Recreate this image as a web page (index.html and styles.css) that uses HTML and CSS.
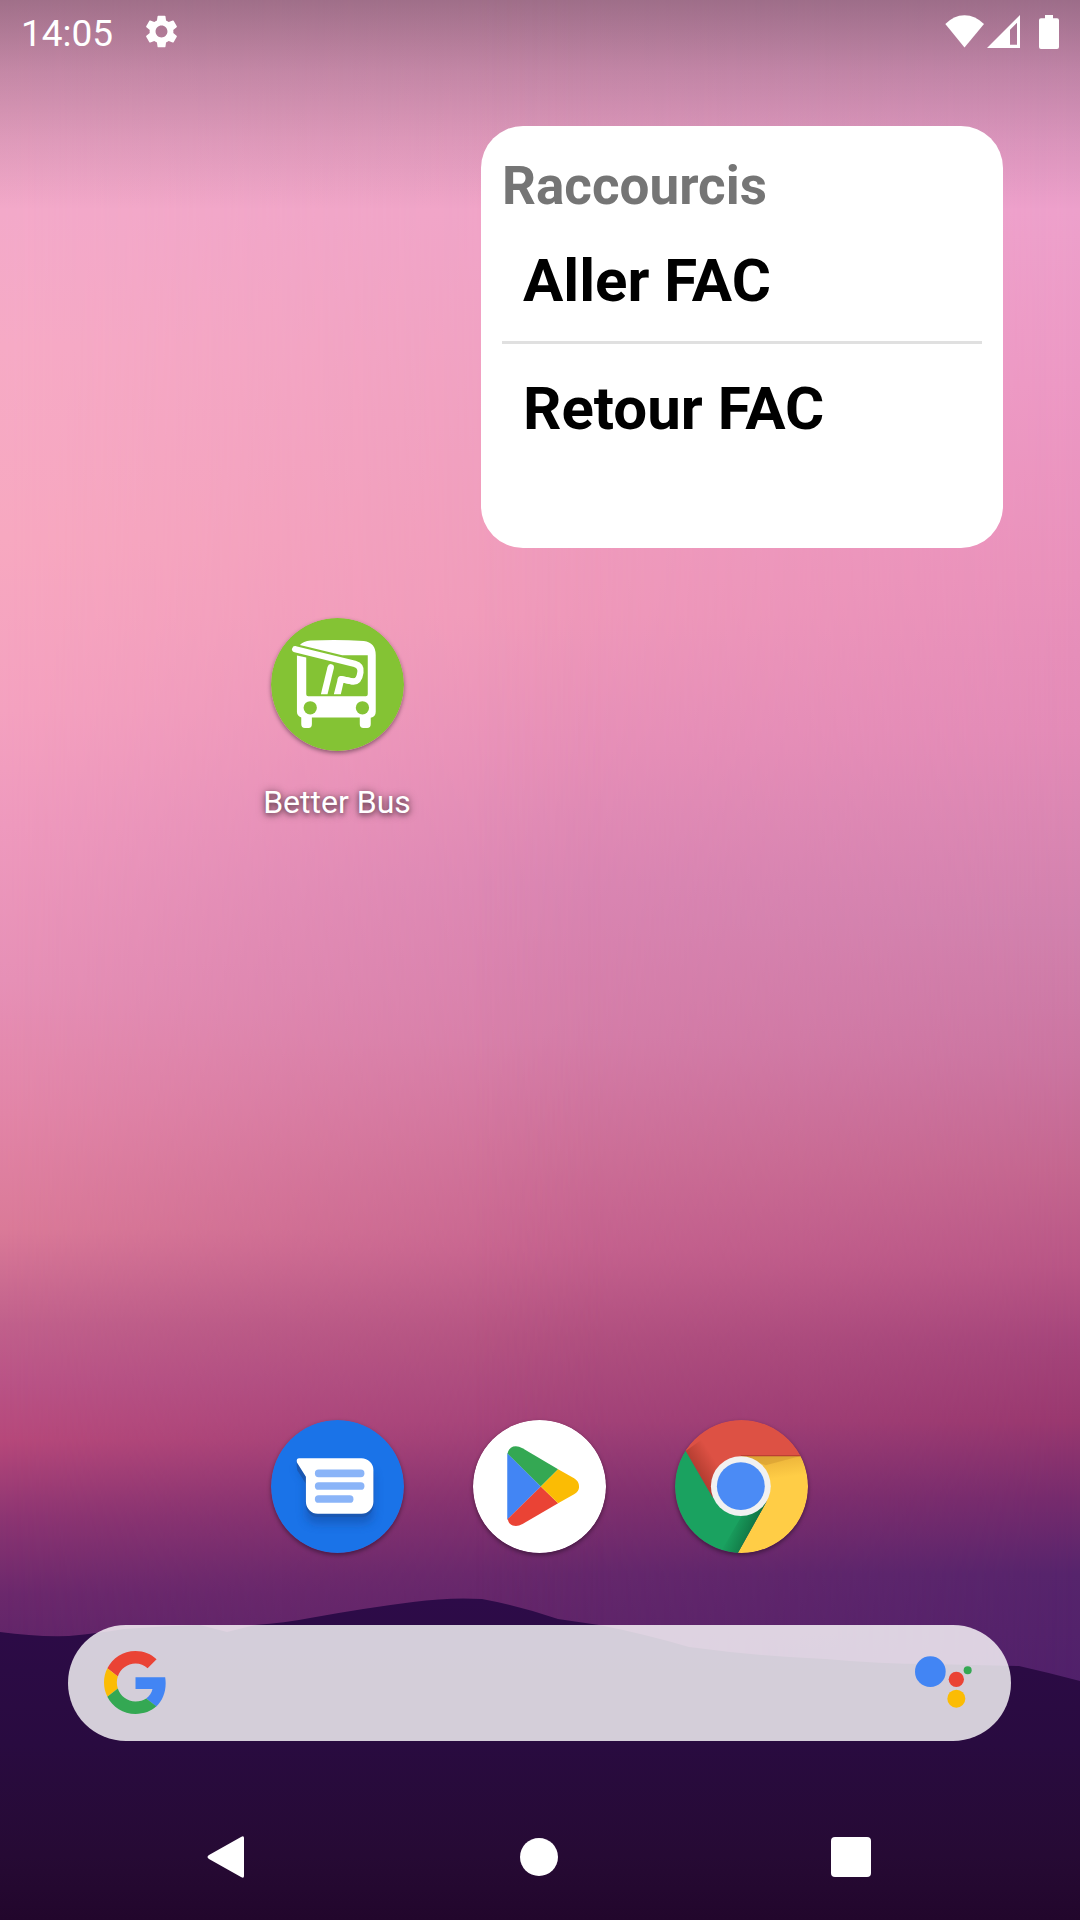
FILE: index.html
```html
<!DOCTYPE html>
<html lang="fr">
<head>
<meta charset="utf-8">
<meta name="viewport" content="width=device-width, initial-scale=1">
<title>Accueil</title>
<link rel="stylesheet" href="styles.css">
</head>
<body>
<div class="home">
  <div class="wallpaper" aria-hidden="true">
    <div class="sky sky-left"></div>
    <div class="sky sky-right"></div>
    <svg class="hills" viewBox="0 0 1080 330" preserveAspectRatio="none">
      <defs>
        <linearGradient id="ground" x1="0" y1="0" x2="0" y2="1">
          <stop offset="0" stop-color="#2d0b48"/>
          <stop offset=".45" stop-color="#290b40"/>
          <stop offset=".8" stop-color="#260a34"/>
          <stop offset="1" stop-color="#22062c"/>
        </linearGradient>
      </defs>
      <path fill="url(#ground)" d="M0 42Q35 47 69 46Q100 43 124 39Q165 36 200 35L227 42L255 35Q285 33 310 28Q365 18 413 12Q450 7 482 9Q520 16 558 29L599 35Q645 44 689 57Q755 66 826 69Q880 74 930 74L1019 76Q1050 83 1080 91V330H0z"/>
    </svg>
    <div class="scrim"></div>
  </div>

  <header class="status">
    <time class="clock">14:05</time>
    <svg class="gear" viewBox="2 2 20 20" aria-label="Paramètres"><path fill="#fff" d="M19.14 12.94c.04-.3.06-.61.06-.94 0-.32-.02-.64-.07-.94l2.03-1.58a.49.49 0 0 0 .12-.61l-1.92-3.32a.488.488 0 0 0-.59-.22l-2.39.96c-.5-.38-1.03-.7-1.62-.94l-.36-2.54a.484.484 0 0 0-.48-.41h-3.84c-.24 0-.43.17-.47.41l-.36 2.54c-.59.24-1.13.57-1.62.94l-2.39-.96c-.22-.08-.47 0-.59.22L2.74 8.87c-.12.21-.08.47.12.61l2.03 1.58c-.05.3-.09.63-.09.94s.02.64.07.94l-2.03 1.58a.49.49 0 0 0-.12.61l1.92 3.32c.12.22.37.29.59.22l2.39-.96c.5.38 1.03.7 1.62.94l.36 2.54c.05.24.24.41.48.41h3.84c.24 0 .44-.17.47-.41l.36-2.54c.59-.24 1.13-.56 1.62-.94l2.39.96c.22.08.47 0 .59-.22l1.92-3.32c.12-.22.07-.47-.12-.61l-2.01-1.58zM12 15.6c-1.98 0-3.6-1.62-3.6-3.6s1.62-3.6 3.6-3.6 3.6 1.62 3.6 3.6-1.62 3.6-3.6 3.6z"/></svg>
    <svg class="wifi" viewBox="134 42 118 99" aria-label="Wi-Fi"><path fill="#fff" d="M193 140L135 69Q160 42 193 42T252 69z"/></svg>
    <svg class="signal" viewBox="261 42 99 99" aria-label="Réseau mobile"><path fill="#fff" fill-rule="evenodd" d="M261 141L360 42V141zM330 86V131H351V65z"/></svg>
    <svg class="battery" viewBox="417 42 60 102" aria-label="Batterie"><path fill="#fff" d="M435 42h24v10h12q6 0 6 6v80q0 6-6 6h-48q-6 0-6-6v-80q0-6 6-6h12z"/></svg>
  </header>

  <main class="workspace">
    <section class="widget" aria-labelledby="widget-title">
      <h1 class="widget-title" id="widget-title">Raccourcis</h1>
      <ul class="shortcuts">
        <li><button class="shortcut" type="button">Aller FAC</button></li>
        <li><button class="shortcut" type="button">Retour FAC</button></li>
      </ul>
    </section>
    <button class="app app-bus" type="button">
      <svg class="icon" viewBox="93 53 400 400" aria-hidden="true">
        <circle cx="293" cy="253" r="200" fill="#84c334"/>
        <path fill="#fff" d="M180 134Q190 123 212 121Q290 117 372 122Q408 127 408 164V335Q408 350 393 353V372Q393 384 382 384H371Q360 384 360 372V352H216V372Q216 384 206 384H195Q184 384 184 372V352Q171 348 171 335V166L199 172V282Q199 288 205 288H378Q384 288 384 282V165H307z"/>
        <path fill="none" stroke="#fff" stroke-width="19" stroke-linecap="round" stroke-linejoin="round" d="M166 147L345 191Q365 197 362 216Q358 245 340 244L303 237"/>
        <path fill="#fff" d="M155 147L168 137L172 157z"/>
        <path fill="#fff" d="M263 200Q266 190 275 192Q284 194 282 204L263 282H243z"/>
        <path fill="#fff" d="M294 236Q298 226 308 228L344 236L338 254L311 248L303 282H282z"/>
        <circle cx="211" cy="323" r="20" fill="#84c334"/>
        <circle cx="368" cy="323" r="20" fill="#84c334"/>
      </svg>
      <span class="app-label">Better Bus</span>
    </button>
  </main>

  <nav class="hotseat" aria-label="Favoris">
    <button class="app app-messages" type="button" aria-label="Messages">
      <svg class="icon" viewBox="63 59 400 400" aria-hidden="true">
        <defs>
          <filter id="soft" x="-30%" y="-30%" width="160%" height="180%"><feGaussianBlur stdDeviation="14"/></filter>
        </defs>
        <circle cx="263" cy="259" r="200" fill="#1a73e8"/>
        <path fill="#174ea6" opacity=".6" filter="url(#soft)" d="M141 200L168 240V340Q168 370 204 370H335Q371 370 371 340V220z"/>
        <path fill="#1a57b2" d="M148 184H335a36 36 0 0 1 36 36V315a36 36 0 0 1-36 36H204a36 36 0 0 1-36-36V251L142 210Q140 200 140 184z"/>
        <path fill="#fff" d="M148 174H335a36 36 0 0 1 36 36V305a36 36 0 0 1-36 36H204a36 36 0 0 1-36-36V230L141 187Q138 174 148 174z"/>
        <g fill="#8ab4f8"><rect x="195" y="208" width="149" height="23" rx="11"/><rect x="195" y="246" width="149" height="23" rx="11"/><rect x="195" y="285" width="116" height="23" rx="11"/></g>
      </svg>
    </button>
    <button class="app app-play" type="button" aria-label="Play Store">
      <svg class="icon" viewBox="39 59 400 400" aria-hidden="true">
        <circle cx="239" cy="259" r="200" fill="#fff"/>
        <path fill="#4285f4" d="M142 158L243 259L142 359z"/>
        <path fill="#34a853" d="M143 160Q148 138 168 138Q177 138 188 144L295 207L243 259z"/>
        <path fill="#ea4335" d="M143 357Q148 378 168 378Q177 378 188 372L295 309L243 259z"/>
        <path fill="#fbbc04" d="M295 207L343 234Q358 243 358 259T343 282L295 309L243 259z"/>
      </svg>
    </button>
    <button class="app app-chrome" type="button" aria-label="Chrome">
      <svg class="icon" viewBox="45 59 400 400" aria-hidden="true">
        <defs>
          <clipPath id="disc"><circle cx="245" cy="259" r="200"/></clipPath>
          <linearGradient id="red-shade" gradientUnits="userSpaceOnUse" x1="110" y1="215" x2="165" y2="180"><stop offset="0" stop-color="#7e2418" stop-opacity=".45"/><stop offset="1" stop-color="#7e2418" stop-opacity="0"/></linearGradient>
          <linearGradient id="green-shade" gradientUnits="userSpaceOnUse" x1="280" y1="385" x2="220" y2="360"><stop offset="0" stop-color="#0b5a33" stop-opacity=".6"/><stop offset="1" stop-color="#0b5a33" stop-opacity="0"/></linearGradient>
          <linearGradient id="yellow-shade" gradientUnits="userSpaceOnUse" x1="300" y1="167" x2="310" y2="240"><stop offset="0" stop-color="#c07a20" stop-opacity=".35"/><stop offset="1" stop-color="#c07a20" stop-opacity="0"/></linearGradient>
        </defs>
        <g clip-path="url(#disc)">
          <path fill="#ffcd46" d="M243 167H445V459H234L320 305z"/>
          <path fill="url(#yellow-shade)" d="M243 167H445V245H320z"/>
          <path fill="#c98f2c" opacity=".4" d="M243 167H422L318 195z"/>
          <path fill="#dd5144" d="M77 152L45 100V59H445V167H243L200 270L157 290z"/>
          <path fill="url(#red-shade)" d="M77 152L150 100L220 190L157 290z"/>
          <path fill="#b03a2e" d="M243 165H430V168H243z"/>
          <path fill="#1aa260" d="M77 152L157 290L243 345L320 305L234 459H45V100z"/>
          <path fill="url(#green-shade)" d="M180 459L250 340L320 305L234 459z"/>
        </g>
        <circle cx="243" cy="258" r="90" fill="#f1f1f1"/>
        <circle cx="243" cy="258" r="72" fill="#4b8bf5"/>
      </svg>
    </button>
  </nav>

  <form class="search" role="search">
    <button class="search-button" type="submit" aria-label="Rechercher">
      <svg class="google" viewBox="0 0 48 48" aria-hidden="true">
        <path fill="#ea4335" d="M24 9.5c3.54 0 6.71 1.22 9.21 3.6l6.85-6.85C35.9 2.38 30.47 0 24 0 14.62 0 6.51 5.38 2.56 13.22l7.98 6.19C12.43 13.72 17.74 9.5 24 9.5z"/>
        <path fill="#4285f4" d="M46.98 24.55c0-1.57-.15-3.09-.38-4.55H24v9.02h12.94c-.58 2.96-2.26 5.48-4.78 7.18l7.73 6c4.51-4.18 7.09-10.36 7.09-17.65z"/>
        <path fill="#fbbc05" d="M10.53 28.59c-.48-1.45-.76-2.99-.76-4.59s.27-3.14.76-4.59l-7.98-6.19C.92 16.46 0 20.12 0 24c0 3.88.92 7.54 2.56 10.78l7.97-6.19z"/>
        <path fill="#34a853" d="M24 48c6.48 0 11.93-2.13 15.89-5.81l-7.73-6c-2.15 1.45-4.92 2.3-8.16 2.3-6.26 0-11.57-4.22-13.47-9.91l-7.98 6.19C6.51 42.62 14.62 48 24 48z"/>
      </svg>
    </button>
    <input class="search-input" type="text" aria-label="Recherche Google">
    <button class="search-button" type="button" aria-label="Assistant">
      <svg class="assistant" viewBox="164 138 171 156" aria-hidden="true">
        <circle cx="210" cy="185" r="46" fill="#4285f4"/><circle cx="288" cy="208" r="23" fill="#ea4335"/><circle cx="322" cy="181" r="12" fill="#34a853"/><circle cx="288" cy="266" r="27" fill="#fbbc04"/>
      </svg>
    </button>
  </form>

  <footer class="navbar">
    <button class="nav-button" type="button" aria-label="Retour"><svg class="nav-icon" viewBox="0 0 42 42"><path fill="#fff" d="M38 2V40Q38 43 35 41L3 23Q0 21 3 19L35 1Q38-1 38 2z"/></svg></button>
    <button class="nav-button" type="button" aria-label="Accueil"><svg class="nav-icon" viewBox="0 0 42 42"><circle cx="21" cy="21" r="19" fill="#fff"/></svg></button>
    <button class="nav-button" type="button" aria-label="Applications récentes"><svg class="nav-icon" viewBox="0 0 42 42"><rect x="1" y="1" width="40" height="40" rx="4" fill="#fff"/></svg></button>
  </footer>
</div>
</body>
</html>
```
FILE: styles.css
```css
* {
  box-sizing: border-box;
}

body {
  margin: 0;
  font-family: Roboto, sans-serif;
}

button,
input {
  margin: 0;
  padding: 0;
  border: 0;
  background: none;
  color: inherit;
  font: inherit;
}

svg {
  display: block;
}

.home {
  position: relative;
  isolation: isolate;
  display: flex;
  flex-direction: column;
  min-height: 100vh;
}

/* Wallpaper */
.wallpaper,
.sky,
.scrim {
  position: absolute;
  inset: 0;
}

.wallpaper {
  z-index: -1;
  overflow: hidden;
  background: linear-gradient(#eea2cb 0%, #f0a4c8 11%, #f09fc0 22%, #f09aba 32%, #e790b8 39%, #db86b3 46%, #d67ea9 54%, #ce7099 60%, #c6638f 65%, #b25180 70%, #a4447a 74%, #85326f 78%, #68286c 82%, #5f2468 86%);
}

.sky-left {
  background: linear-gradient(#efa3cb 0%, #f3a9c9 11%, #f6aac5 18%, #f7a8c0 28%, #f4a1bf 37%, #ee99bd 43%, #e690b6 51%, #e285a7 58%, #da7a98 64%, #c0608b 69%, #b95386 72%, #b6487a 75%, #8d3572 79%, #6b286c 83%, #5f2468 86%);
  mask-image: linear-gradient(to right, #000, rgba(0, 0, 0, .5) 26%, transparent 56%);
}

.sky-right {
  background: linear-gradient(#e99fcb 0%, #eda0cb 11%, #ec98c4 20%, #e991bb 30%, #e38bb7 38%, #d181ad 48%, #cb75a1 55%, #c4668f 61%, #b85585 66%, #a4447a 70%, #99386f 74%, #762b6d 78%, #56246c 82%, #50206a 88%);
  mask-image: linear-gradient(to left, #000, rgba(0, 0, 0, .5) 26%, transparent 56%);
}

.hills {
  position: absolute;
  bottom: 0;
  width: 100%;
  height: 330px;
}

.scrim {
  height: 210px;
  background: linear-gradient(rgba(20, 20, 20, .36), rgba(20, 20, 20, .2) 34%, rgba(20, 20, 20, .09) 66%, transparent);
}

/* Status bar */
.status {
  display: flex;
  align-items: center;
  height: 63px;
  padding: 0 21px;
  color: #fff;
}

.clock {
  padding-top: 4px;
  font-size: 37px;
  line-height: 44px;
}

.gear {
  width: 33px;
  height: 33px;
  margin-left: 32px;
}

.wifi {
  width: 39px;
  height: 33px;
  margin-left: auto;
}

.signal {
  width: 33px;
  height: 33px;
  margin-left: 3px;
}

.battery {
  width: 20px;
  height: 34px;
  margin-left: 19px;
}

/* Home screen grid */
.workspace,
.hotseat {
  display: grid;
  grid-template-columns: repeat(5, 1fr);
  padding: 0 36px 0 34px;
}

.workspace {
  flex: 1;
  align-content: start;
  row-gap: 70px;
  padding-top: 63px;
}

.widget {
  grid-column: 3 / 6;
  min-height: 422px;
  margin: 0 41px 0 43px;
  padding: 25px 21px;
  border-radius: 42px;
  background: #fff;
}

.widget-title {
  margin: 0;
  color: #757575;
  font-size: 53px;
  font-weight: 700;
  line-height: 70px;
}

.shortcuts {
  margin: 0;
  padding: 0;
  list-style: none;
}

.shortcuts li + li {
  padding-top: 5px;
  border-top: 3px solid #e0e0e0;
}

.shortcut {
  display: block;
  width: 100%;
  padding: 0 21px;
  color: #000;
  font-size: 60px;
  font-weight: 700;
  line-height: 120px;
  text-align: left;
}

.app {
  display: flex;
  flex-direction: column;
  align-items: center;
  gap: 31px;
}

.app-bus,
.app-messages {
  grid-column: 2;
}

.icon {
  width: 133px;
  height: 133px;
  border-radius: 50%;
  box-shadow: 0 2px 4px rgba(0, 0, 0, .4);
}

.app-label {
  color: #fff;
  font-size: 32px;
  line-height: 40px;
  text-shadow: 0 1px 8px rgba(0, 0, 0, .6), 0 2px 4px rgba(0, 0, 0, .3);
}

/* Search bar */
.search {
  display: flex;
  align-items: center;
  height: 116px;
  margin: 72px 69px 53px 68px;
  padding: 0 39px 2px 36px;
  border-radius: 58px;
  background: rgba(255, 255, 255, .8);
}

.search-input {
  flex: 1;
  min-width: 0;
  height: 100%;
  padding: 0 24px;
  outline: 0;
  color: #3c4043;
  font-size: 37px;
}

.google {
  width: 63px;
  height: 63px;
}

.assistant {
  width: 57px;
  height: 52px;
}

/* Navigation bar */
.navbar {
  display: flex;
  justify-content: space-between;
  align-items: center;
  height: 126px;
  padding: 0 208px 0 206px;
}

.nav-icon {
  width: 42px;
  height: 42px;
}
```
